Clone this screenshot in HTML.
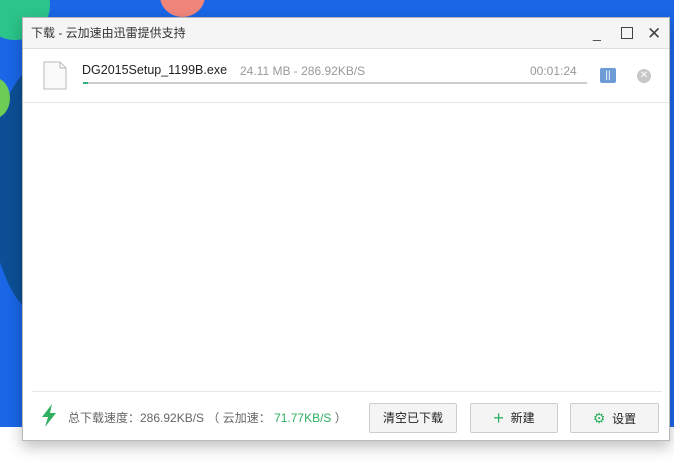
<!DOCTYPE html>
<html><head><meta charset="utf-8"><style>
*{margin:0;padding:0;box-sizing:border-box}
body{width:674px;height:469px;overflow:hidden;position:relative;background:#fff;font-family:"Liberation Sans","Noto Sans CJK SC",sans-serif}
.bg{position:absolute;left:0;top:0;width:674px;height:427px;background:#1a66e6;overflow:hidden}
.win{position:absolute;left:22px;top:17px;width:648px;height:424px;background:#fff;border:1px solid #b9b9b9;box-shadow:0 6px 14px rgba(0,0,0,.25)}
.title{height:31px;background:#f5f5f5;border-bottom:1px solid #e0e0e0;font-size:12px;color:#333;line-height:31px;padding-left:8px;position:relative}
.abs{position:absolute}
.fname{font-size:12.5px;color:#222}
.gray{color:#888;font-size:12px}
.btn{position:absolute;top:385px;height:30px;border:1px solid #ccc;border-radius:2px;background:#f4f4f4;font-size:12px;color:#222;text-align:center;line-height:28px}
</style></head><body>
<div class="bg">
<div class="abs" style="left:-20px;top:-30px;width:70px;height:70px;border-radius:50%;background:#2bc48a"></div>
<div class="abs" style="left:160px;top:-25px;width:45px;height:42px;border-radius:50%;background:#f0867a"></div>
<div class="abs" style="left:-10px;top:60px;width:120px;height:260px;border-radius:50%;background:#0c4f96"></div>
<div class="abs" style="left:-20px;top:78px;width:30px;height:40px;border-radius:50%;background:#6dcc55"></div>
</div>
<div class="win">
<div class="title">下载 - 云加速由迅雷提供支持
<span class="abs" style="left:570px;top:0;font-size:14px;color:#444">_</span>
<span class="abs" style="left:598px;top:9px;width:12px;height:12px;border:1.5px solid #444"></span>
<span class="abs" style="left:624px;top:0;font-size:17px;color:#444">✕</span>
</div>
<div style="height:54px;border-bottom:1px solid #e6e6e6;position:relative">
<svg class="abs" style="left:20px;top:12px" width="24" height="29"><path d="M1 1h16l6 6v21H1z" fill="#fafafa" stroke="#bbb"/><path d="M17 1v6h6" fill="none" stroke="#bbb"/></svg>
<span class="abs fname" style="left:59px;top:14px">DG2015Setup_1199B.exe</span>
<span class="abs gray" style="left:217px;top:15px;color:#999">24.11 MB - 286.92KB/S</span>
<span class="abs gray" style="left:507px;top:15px;color:#999">00:01:24</span>
<div class="abs" style="left:60px;top:33px;width:504px;height:2px;background:#ccc"></div>
<div class="abs" style="left:60px;top:33px;width:5px;height:2px;background:#2eb47a"></div>
<div class="abs" style="left:577px;top:19px;width:16px;height:15px;border-radius:2px;background:#6c9bd6;color:#fff;font-size:10px;text-align:center;line-height:15px">||</div>
<div class="abs" style="left:614px;top:20px;width:14px;height:14px;border-radius:50%;background:#c8c8c8;color:#fff;font-size:10px;text-align:center;line-height:14px">✕</div>
</div>
<div class="abs" style="left:9px;top:373px;width:630px;height:1px;background:#e6e6e6"></div>
<svg class="abs" style="left:18px;top:386px" width="16" height="24"><path d="M11 0L1 13h6l-3 10 11-14H9z" fill="#2fb061"/></svg>
<span class="abs" style="left:45px;top:391px;font-size:12px;color:#666">总下载速度：286.92KB/S （ 云加速： <span style="color:#2fb061">71.77KB/S</span> ）</span>
<div class="btn" style="left:346px;width:88px">清空已下载</div>
<div class="btn" style="left:447px;width:88px"><span style="color:#2fb061;font-size:18px;vertical-align:-2px">+</span>&nbsp; 新建</div>
<div class="btn" style="left:547px;width:89px"><span style="color:#2fb061;font-size:14px">⚙</span>&nbsp; 设置</div>
</div>
</body></html>
